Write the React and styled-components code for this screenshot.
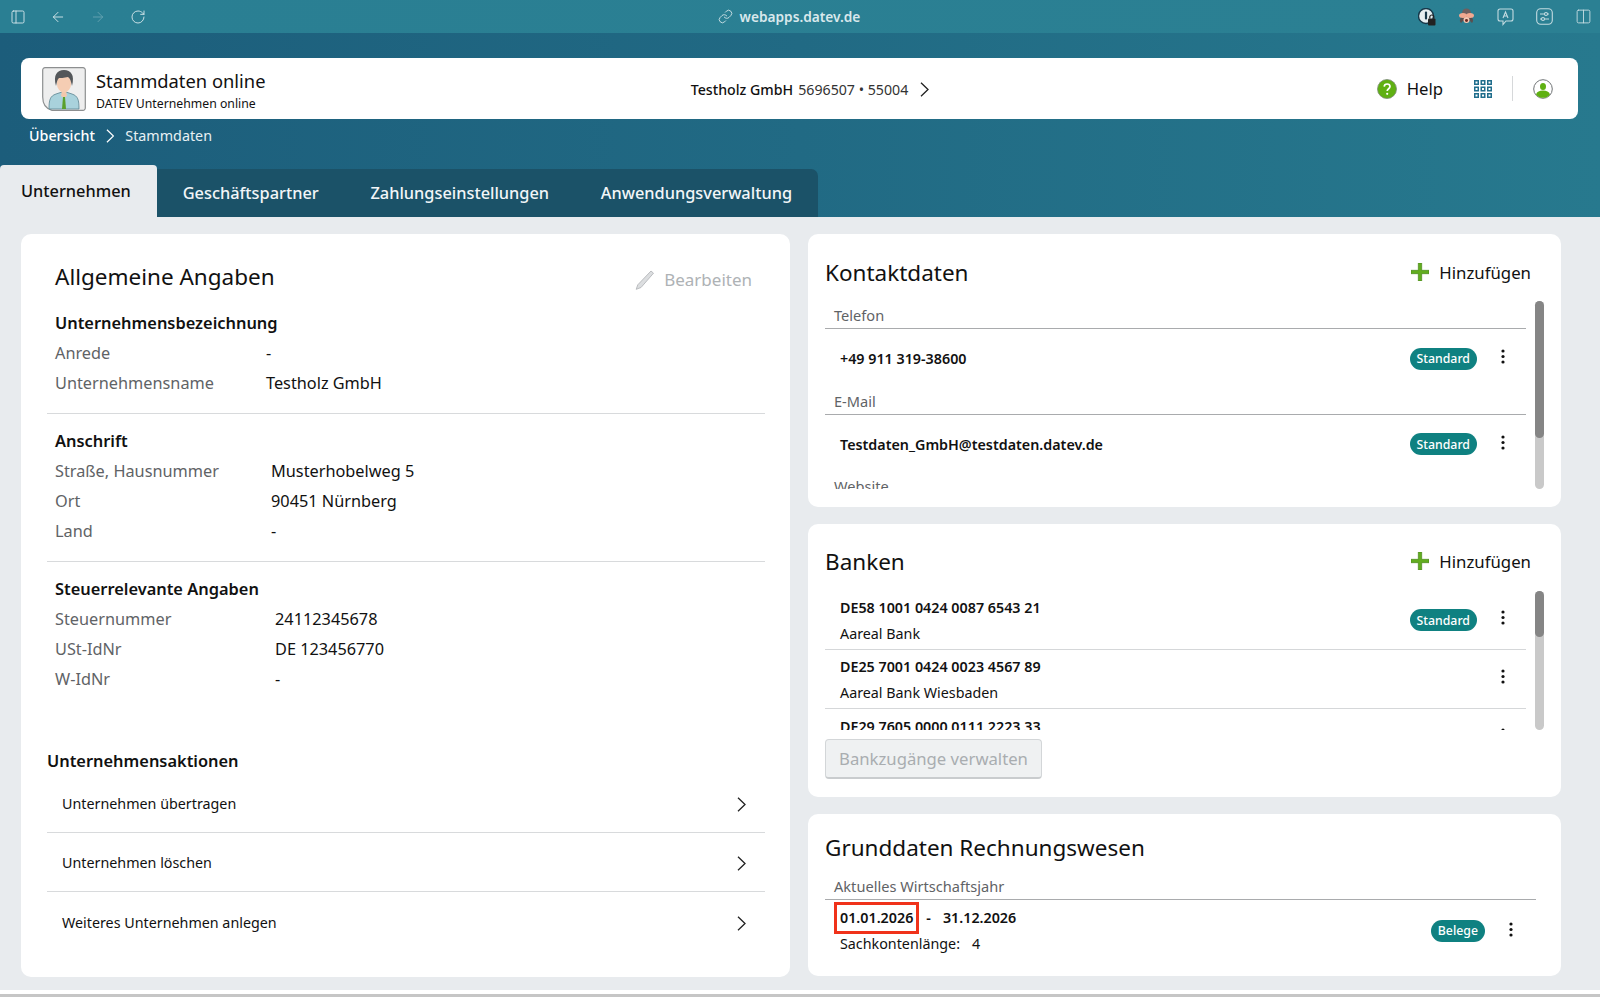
import React from "react";
import styled, { createGlobalStyle } from "styled-components";
import { ArrowLeft, ArrowRight, RotateCw, Link, PanelLeft, Columns2 } from "lucide-react";

const GlobalStyle = createGlobalStyle`
  html, body {
    margin: 0;
    padding: 0;
    background: #e8ebee;
  }
  body {
    font-family: "Noto Sans", "Open Sans", sans-serif;
    color: #111;
  }
`;

const Page = styled.div`
  width: 1600px;
  height: 997px;
  overflow: hidden;
  display: flex;
  flex-direction: column;
  background: #e8ebee;
`;

const Toolbar = styled.div`
  height: 33px;
  flex: none;
  display: grid;
  grid-template-columns: 1fr auto 1fr;
  align-items: center;
  padding: 0 8px 0 10px;
  box-sizing: border-box;
  background: linear-gradient(90deg, #2a7f93, #2b8093);
  color: #d8e8ec;
`;

const NavIcons = styled.div`
  display: flex;
  align-items: center;
  gap: 24px;
  color: #d3e5ea;
`;

const NavSlot = styled.span`
  display: flex;
  opacity: ${(p) => (p.$dim ? 0.35 : 1)};
`;

const Address = styled.div`
  display: flex;
  align-items: center;
  gap: 7px;
  font-size: 13.7px;
  font-weight: 600;
  margin-right: 24px;
`;

const Extensions = styled.div`
  display: flex;
  justify-content: flex-end;
  align-items: center;
  gap: 22px;
`;

const Hero = styled.div`
  height: 184px;
  flex: none;
  display: flex;
  flex-direction: column;
  background: linear-gradient(90deg, #1c5d7b 0%, #216a84 50%, #27798e 100%);
`;

const AppBar = styled.header`
  margin: 25px 22px 0 20.5px;
  height: 61px;
  flex: none;
  display: grid;
  grid-template-columns: 1fr auto 1fr;
  align-items: center;
  padding: 0 25px 0 21.5px;
  box-sizing: border-box;
  background: #fff;
  border-radius: 8px;
`;

const Brand = styled.div`
  display: flex;
  align-items: center;
  gap: 10px;
`;

const BrandText = styled.div`
  display: flex;
  flex-direction: column;
  padding-top: 2px;
`;

const BrandTitle = styled.div`
  font-size: 18.35px;
  line-height: 26px;
`;

const BrandSub = styled.div`
  margin-top: 1px;
  font-size: 12.25px;
  line-height: 17px;
`;

const Company = styled.div`
  display: flex;
  align-items: center;
  margin: 2px 0 0 25px;
  font-size: 14.2px;
  font-weight: 500;
  gap: 5px;
`;

const CompanyId = styled.span`
  font-weight: 400;
  color: #333;
  margin-right: 7px;
`;

const AppActions = styled.div`
  display: flex;
  justify-content: flex-end;
  align-items: center;
`;

const HelpLabel = styled.span`
  font-size: 16.7px;
  margin: 0 31px 0 10px;
`;

const Divider = styled.span`
  width: 1px;
  height: 25px;
  background: #d6d8da;
  margin: 0 20px;
`;

const Breadcrumb = styled.nav`
  display: flex;
  align-items: center;
  gap: 11px;
  height: 33px;
  padding-left: 29px;
  font-size: 14.3px;
  color: #fff;
`;

const Crumb = styled.span`
  font-weight: ${(p) => (p.$strong ? 500 : 400)};
  color: ${(p) => (p.$strong ? "#fff" : "#e8f1f4")};
`;

const Tabs = styled.div`
  margin-top: auto;
  display: flex;
  align-items: flex-end;
`;

const ActiveTab = styled.div`
  width: 157px;
  height: 52px;
  padding: 0 0 0 21px;
  box-sizing: border-box;
  display: flex;
  align-items: center;
  background: #e8ebee;
  border-radius: 4px 4px 0 0;
  font-size: 16.35px;
  font-weight: 500;
`;

const TabGroup = styled.div`
  display: flex;
  height: 48px;
  background: #1b5268;
  border-radius: 0 7px 0 0;
`;

const Tab = styled.div`
  display: flex;
  align-items: center;
  padding: 0 26px 1px 25.7px;
  font-size: 16.35px;
  font-weight: 500;
  color: #f2f6f8;
`;

const Main = styled.main`
  height: 773px;
  flex: none;
  box-sizing: border-box;
  padding: 17px 39px 13px 20.5px;
  display: grid;
  grid-template-columns: 769.5px 753px;
  gap: 18px;
`;

const Card = styled.section`
  background: #fff;
  border-radius: 10px;
  box-sizing: border-box;
`;

const LeftCard = styled(Card)`
  padding: 25px 25px 0 26.5px;
`;

const Column = styled.div`
  display: flex;
  flex-direction: column;
  gap: 17px;
`;

const RightCard = styled(Card)`
  height: ${(p) => p.$height}px;
  padding: ${(p) => p.$top}px 17px 0;
`;

const CardHead = styled.div`
  display: flex;
  justify-content: space-between;
  align-items: center;
  height: ${(p) => p.$height || 32}px;
  padding: 0 ${(p) => p.$right || 0}px 0 ${(p) => p.$left || 0}px;
`;

const CardTitle = styled.h2`
  margin: 0;
  font-size: 22.5px;
  font-weight: 400;
`;

const Disabled = styled.div`
  display: flex;
  align-items: center;
  gap: 9px;
  margin-top: 7px;
  font-size: 17px;
  color: #aeb2b5;
`;

const AddButton = styled.div`
  display: flex;
  align-items: center;
  gap: 10px;
  font-size: 16.8px;
`;

const Block = styled.div`
  padding: ${(p) => (p.$first ? "15px" : "12px")} 0 15px 8px;
  border-bottom: ${(p) => (p.$line ? "1.5px solid #d8dadc" : "none")};
`;

const BlockTitle = styled.h3`
  margin: 0;
  font-size: 16.4px;
  line-height: 30px;
  font-weight: 600;
`;

const Field = styled.div`
  display: grid;
  grid-template-columns: ${(p) => p.$label}px 1fr;
  font-size: 16.3px;
  line-height: 30px;
`;

const FieldLabel = styled.span`
  color: #5f6366;
`;

const ActionsTitle = styled.h3`
  margin: 39px 0 0;
  font-size: 16.4px;
  line-height: 26px;
  font-weight: 600;
`;

const ActionRow = styled.div`
  height: ${(p) => (p.$line ? 59 : 61)}px;
  box-sizing: border-box;
  display: flex;
  justify-content: space-between;
  align-items: center;
  padding: 0 19px 0 15px;
  font-size: 14.3px;
  border-bottom: ${(p) => (p.$line ? "1.5px solid #d8dadc" : "none")};
`;

const RowChevron = styled.span`
  display: flex;
  margin-top: 2px;
`;

const ScrollArea = styled.div`
  margin-top: ${(p) => p.$top}px;
  height: ${(p) => p.$height}px;
  display: grid;
  grid-template-columns: 701px 9px;
  gap: 9px;
`;

const ListClip = styled.div`
  overflow: hidden;
`;

const Track = styled.div`
  position: relative;
  background: #c9c9c9;
  border-radius: 5px;
`;

const Thumb = styled.div`
  position: absolute;
  inset: 0 0 auto 0;
  height: ${(p) => p.$height}px;
  background: #858585;
  border-radius: 5px;
`;

const GroupLabel = styled.div`
  height: 27px;
  line-height: 29px;
  padding-left: 9px;
  font-size: 14.6px;
  color: #5f6366;
  border-bottom: 1.5px solid #a9abad;
`;

const ContactRow = styled.div`
  height: 57.5px;
  box-sizing: border-box;
  display: flex;
  align-items: center;
  justify-content: space-between;
  padding: 2px 0 0 15px;
  font-size: 14.3px;
  font-weight: 600;
`;

const RowEnd = styled.div`
  display: flex;
  align-items: center;
`;

const Badge = styled.span`
  height: 22px;
  padding: 0 7px;
  display: inline-flex;
  align-items: center;
  border-radius: 11px;
  background: #0f8181;
  color: #fff;
  font-size: 12.3px;
  font-weight: 500;
`;

const Dots = styled.span`
  width: 46px;
  margin-left: 3px;
  margin-top: ${(p) => p.$lift}px;
  display: flex;
  justify-content: center;
`;

const BankRow = styled.div`
  height: 59px;
  box-sizing: border-box;
  display: flex;
  align-items: center;
  justify-content: space-between;
  padding-left: 15px;
  border-bottom: ${(p) => (p.$line ? "1.5px solid #d5d7d9" : "none")};
`;

const BankText = styled.div`
  margin-top: 2.5px;
  font-size: 14.3px;
  line-height: 26px;
`;

const Strong = styled.div`
  font-weight: 600;
`;

const ManageButton = styled.div`
  margin-top: 9px;
  width: 217px;
  height: 40px;
  box-sizing: border-box;
  display: flex;
  align-items: center;
  justify-content: center;
  background: #eff1f2;
  border: 1px solid #d3d6d8;
  border-bottom: 2px solid #c9ccce;
  border-radius: 4px;
  font-size: 16.7px;
  color: #a9adb0;
`;

const YearBlock = styled.div`
  margin-top: 9px;
  width: 711px;
`;

const YearRow = styled.div`
  display: flex;
  justify-content: space-between;
  align-items: center;
  padding: 5px 2px 0 15px;
  font-size: 14.3px;
  line-height: 26px;
`;

const DateLine = styled.div`
  display: flex;
  font-weight: 600;
`;

const DateMark = styled.span`
  padding: 0 3px;
  margin: 0 -3px;
  outline: 3px solid #f0321a;
`;

const DateDash = styled.span`
  margin: 0 12px 0 13px;
`;

const LengthValue = styled.span`
  margin-left: 12px;
`;

const BottomEdge = styled.div`
  flex: none;
  height: 7px;
  background: linear-gradient(#fff 0 4px, #c6c6c6 4px);
`;

const Chevron = ({ size = 15, color = "#222" }) => (
  <svg width={size * 0.6} height={size} viewBox="0 0 9 15" fill="none">
    <path d="M1 .8 8 7.5 1 14.2" stroke={color} strokeWidth="1.3" />
  </svg>
);

const Kebab = () => (
  <svg width="4" height="15" viewBox="0 0 4 15" fill="#111">
    <circle cx="2" cy="2" r="1.6" />
    <circle cx="2" cy="7.5" r="1.6" />
    <circle cx="2" cy="13" r="1.6" />
  </svg>
);

const Plus = () => (
  <svg width="18" height="18" viewBox="0 0 18 18">
    <path d="M7.3 0h3.400v7.300H18v3.400h-7.300V18H7.300v-7.300H0V7.300h7.300z" fill="#62ad1f" stroke="#3f7d10" strokeWidth=".6" />
  </svg>
);

const Pencil = () => (
  <svg width="20" height="20" viewBox="0 0 20 20">
    <path d="M16 1 18.500 3.200 6 17.500 1.200 19.300 2.800 14.800z" fill="#dcdee0" stroke="#b4b7ba" strokeWidth=".9" />
  </svg>
);

const Avatar = () => (
  <svg width="44" height="44" viewBox="0 0 44 44">
    <path d="M3 .7h38a2.300 2.300 0 0 1 2.300 2.300v38a2.300 2.300 0 0 1-2.300 2.300H10Q.7 41 .7 30V3A2.300 2.300 0 0 1 3 .7z" fill="#eeeeee" stroke="#8d8f90" strokeWidth="1.2" />
    <path d="M7 42c0-9 1-13 7-15l6-2h4l6 2c6 2 7 6 7 15z" fill="#a9d2dc" stroke="#5c8490" strokeWidth=".8" />
    <path d="M20 24h4l1 5-3 2-3-2z" fill="#f3c7ac" />
    <path d="M21 30h2l1 12h-4z" fill="#5aa02c" />
    <ellipse cx="22" cy="16" rx="7.2" ry="9.5" fill="#f5cdb3" />
    <path d="M14 19C11 8 15 3 22 3s11 5 8 16c-1-5-2-8-4-9-4 1-8 1-9 1-2 2-2 4-3 8z" fill="#54575a" />
  </svg>
);

const HelpIcon = () => (
  <svg width="20" height="20" viewBox="0 0 20 20">
    <circle cx="10" cy="10" r="9.500" fill="#5fb012" stroke="#7d8a78" strokeWidth=".8" />
    <path d="M7.200 7.600C7.300 5.900 8.500 5 10.100 5c1.700 0 2.900 1 2.900 2.500 0 2.300-2.800 2.200-2.800 4.500" fill="none" stroke="#fff" strokeWidth="1.700" />
    <circle cx="10.200" cy="14.800" r="1.100" fill="#fff" />
  </svg>
);

const AppGrid = () => (
  <svg width="18" height="18" viewBox="0 0 18 18" fill="#1f6d8c">
    {[0, 6.5, 13].flatMap((y) =>
      [0, 6.5, 13].map((x) => (
        <path key={`${x}-${y}`} fillRule="evenodd" d={`M${x} ${y}h5v5h-5zM${x + 1.5} ${y + 1.5}v2h2v-2z`} />
      ))
    )}
  </svg>
);

const UserIcon = () => (
  <svg width="20" height="20" viewBox="0 0 20 20">
    <circle cx="10" cy="10" r="9.300" fill="#fff" stroke="#6f7375" strokeWidth="1" />
    <ellipse cx="10" cy="7.500" rx="3" ry="3.500" fill="#5fb012" />
    <path d="M3 15.500c1-3 3.500-4 7-4s6 1 7 4a9 9 0 0 1-14 0z" fill="#5fb012" />
  </svg>
);

const OnePassword = () => (
  <svg width="18" height="18" viewBox="0 0 18 18">
    <circle cx="8" cy="8" r="7.500" fill="#e6eef0" stroke="#17384a" strokeWidth="1.400" />
    <rect x="6.900" y="3.500" width="2.200" height="8" rx="1" fill="#17384a" />
    <rect x="10" y="10.500" width="7.500" height="7" rx="1" fill="#222" />
    <path d="M11.800 10.500V9a2 2 0 0 1 4 0v1.500" fill="none" stroke="#222" strokeWidth="1.200" />
  </svg>
);

const Monkey = () => (
  <svg width="17" height="17" viewBox="0 0 17 17">
    <path d="M3 15c-2-2-1-5 1-6h9c2 1 3 4 1 6l-2-2H5z" fill="#5a5050" />
    <circle cx="8.500" cy="5" r="4.500" fill="#6f5f5f" />
    <ellipse cx="5" cy="7.500" rx="4" ry="2.500" fill="#f2a890" />
    <ellipse cx="12" cy="7.500" rx="4" ry="2.500" fill="#f2a890" />
    <ellipse cx="8.500" cy="12" rx="3" ry="3" fill="#f5c5b0" />
    <ellipse cx="8.500" cy="12.500" rx="1.500" ry="1.400" fill="#6b2a22" />
  </svg>
);

const Translate = () => (
  <svg width="17" height="18" viewBox="0 0 17 18" fill="none" stroke="#c4dbe1" strokeWidth="1.100">
    <path d="M3 1h11a2 2 0 0 1 2 2v8a2 2 0 0 1-2 2H9l-3 3.500V13H3a2 2 0 0 1-2-2V3a2 2 0 0 1 2-2z" />
    <path d="M6 10l2.500-6L11 10M6.900 8h3.200" />
  </svg>
);

const Sliders = () => (
  <svg width="17" height="17" viewBox="0 0 17 17" fill="none" stroke="#c4dbe1" strokeWidth="1.100">
    <rect x=".7" y=".7" width="15.600" height="15.600" rx="4" />
    <path d="M4 6h9M4 11h9" />
    <circle cx="10" cy="6" r="1.500" fill="#2a7f93" />
    <circle cx="7" cy="11" r="1.500" fill="#2a7f93" />
  </svg>
);

function App() {
  return (
    <Page>
      <GlobalStyle />
      <Toolbar>
        <NavIcons>
          <PanelLeft size={16} strokeWidth={1.4} />
          <ArrowLeft size={16} strokeWidth={1.4} />
          <NavSlot $dim>
            <ArrowRight size={16} strokeWidth={1.4} />
          </NavSlot>
          <RotateCw size={16} strokeWidth={1.4} />
        </NavIcons>
        <Address>
          <Link size={15} strokeWidth={1.4} />
          webapps.datev.de
        </Address>
        <Extensions>
          <OnePassword />
          <Monkey />
          <Translate />
          <Sliders />
          <Columns2 size={17} strokeWidth={1.3} color="#c4dbe1" />
        </Extensions>
      </Toolbar>

      <Hero>
        <AppBar>
          <Brand>
            <Avatar />
            <BrandText>
              <BrandTitle>Stammdaten online</BrandTitle>
              <BrandSub>DATEV Unternehmen online</BrandSub>
            </BrandText>
          </Brand>
          <Company>
            Testholz GmbH <CompanyId>5696507 • 55004</CompanyId>
            <Chevron size={15} />
          </Company>
          <AppActions>
            <HelpIcon />
            <HelpLabel>Help</HelpLabel>
            <AppGrid />
            <Divider />
            <UserIcon />
          </AppActions>
        </AppBar>
        <Breadcrumb>
          <Crumb $strong>Übersicht</Crumb>
          <Chevron size={14} color="#fff" />
          <Crumb>Stammdaten</Crumb>
        </Breadcrumb>
        <Tabs>
          <ActiveTab>Unternehmen</ActiveTab>
          <TabGroup>
            <Tab>Geschäftspartner</Tab>
            <Tab>Zahlungseinstellungen</Tab>
            <Tab>Anwendungsverwaltung</Tab>
          </TabGroup>
        </Tabs>
      </Hero>

      <Main>
        <LeftCard>
          <CardHead $height={34} $left={8} $right={13}>
            <CardTitle>Allgemeine Angaben</CardTitle>
            <Disabled>
              <Pencil />
              Bearbeiten
            </Disabled>
          </CardHead>
          <Block $first $line>
            <BlockTitle>Unternehmensbezeichnung</BlockTitle>
            <Field $label={211}>
              <FieldLabel>Anrede</FieldLabel>
              <span>-</span>
            </Field>
            <Field $label={211}>
              <FieldLabel>Unternehmensname</FieldLabel>
              <span>Testholz GmbH</span>
            </Field>
          </Block>
          <Block $line>
            <BlockTitle>Anschrift</BlockTitle>
            <Field $label={216}>
              <FieldLabel>Straße, Hausnummer</FieldLabel>
              <span>Musterhobelweg 5</span>
            </Field>
            <Field $label={216}>
              <FieldLabel>Ort</FieldLabel>
              <span>90451 Nürnberg</span>
            </Field>
            <Field $label={216}>
              <FieldLabel>Land</FieldLabel>
              <span>-</span>
            </Field>
          </Block>
          <Block>
            <BlockTitle>Steuerrelevante Angaben</BlockTitle>
            <Field $label={220}>
              <FieldLabel>Steuernummer</FieldLabel>
              <span>24112345678</span>
            </Field>
            <Field $label={220}>
              <FieldLabel>USt-IdNr</FieldLabel>
              <span>DE 123456770</span>
            </Field>
            <Field $label={220}>
              <FieldLabel>W-IdNr</FieldLabel>
              <span>-</span>
            </Field>
          </Block>
          <ActionsTitle>Unternehmensaktionen</ActionsTitle>
          <ActionRow $line>
            Unternehmen übertragen
            <RowChevron>
              <Chevron size={15} />
            </RowChevron>
          </ActionRow>
          <ActionRow $line>
            Unternehmen löschen
            <RowChevron>
              <Chevron size={15} />
            </RowChevron>
          </ActionRow>
          <ActionRow>
            Weiteres Unternehmen anlegen
            <RowChevron>
              <Chevron size={15} />
            </RowChevron>
          </ActionRow>
        </LeftCard>

        <Column>
          <RightCard $height={273} $top={22}>
            <CardHead $right={13}>
              <CardTitle>Kontaktdaten</CardTitle>
              <AddButton>
                <Plus />
                Hinzufügen
              </AddButton>
            </CardHead>
            <ScrollArea $height={188} $top={13}>
              <ListClip>
                <GroupLabel>Telefon</GroupLabel>
                <ContactRow>
                  +49 911 319-38600
                  <RowEnd>
                    <Badge>Standard</Badge>
                    <Dots $lift={-4}>
                      <Kebab />
                    </Dots>
                  </RowEnd>
                </ContactRow>
                <GroupLabel>E-Mail</GroupLabel>
                <ContactRow>
                  Testdaten_GmbH@testdaten.datev.de
                  <RowEnd>
                    <Badge>Standard</Badge>
                    <Dots $lift={-4}>
                      <Kebab />
                    </Dots>
                  </RowEnd>
                </ContactRow>
                <GroupLabel>Website</GroupLabel>
              </ListClip>
              <Track>
                <Thumb $height={137} />
              </Track>
            </ScrollArea>
          </RightCard>

          <RightCard $height={273} $top={21}>
            <CardHead $right={13}>
              <CardTitle>Banken</CardTitle>
              <AddButton>
                <Plus />
                Hinzufügen
              </AddButton>
            </CardHead>
            <ScrollArea $height={139} $top={14}>
              <ListClip>
                <BankRow $line>
                  <BankText>
                    <Strong>DE58 1001 0424 0087 6543 21</Strong>
                    Aareal Bank
                  </BankText>
                  <RowEnd>
                    <Badge>Standard</Badge>
                    <Dots $lift={-6}>
                      <Kebab />
                    </Dots>
                  </RowEnd>
                </BankRow>
                <BankRow $line>
                  <BankText>
                    <Strong>DE25 7001 0424 0023 4567 89</Strong>
                    Aareal Bank Wiesbaden
                  </BankText>
                  <RowEnd>
                    <Dots $lift={-6}>
                      <Kebab />
                    </Dots>
                  </RowEnd>
                </BankRow>
                <BankRow>
                  <BankText>
                    <Strong>DE29 7605 0000 0111 2223 33</Strong>
                    Aareal Bank
                  </BankText>
                  <RowEnd>
                    <Dots $lift={-6}>
                      <Kebab />
                    </Dots>
                  </RowEnd>
                </BankRow>
              </ListClip>
              <Track>
                <Thumb $height={46} />
              </Track>
            </ScrollArea>
            <ManageButton>Bankzugänge verwalten</ManageButton>
          </RightCard>

          <RightCard $height={162} $top={17}>
            <CardHead>
              <CardTitle>Grunddaten Rechnungswesen</CardTitle>
            </CardHead>
            <YearBlock>
              <GroupLabel>Aktuelles Wirtschaftsjahr</GroupLabel>
              <YearRow>
                <div>
                  <DateLine>
                    <DateMark>01.01.2026</DateMark>
                    <DateDash>-</DateDash>
                    31.12.2026
                  </DateLine>
                  Sachkontenlänge:
                  <LengthValue>4</LengthValue>
                </div>
                <RowEnd>
                  <Badge>Belege</Badge>
                  <Dots $lift={-3}>
                    <Kebab />
                  </Dots>
                </RowEnd>
              </YearRow>
            </YearBlock>
          </RightCard>
        </Column>
      </Main>
      <BottomEdge />
    </Page>
  );
}

export default App;
